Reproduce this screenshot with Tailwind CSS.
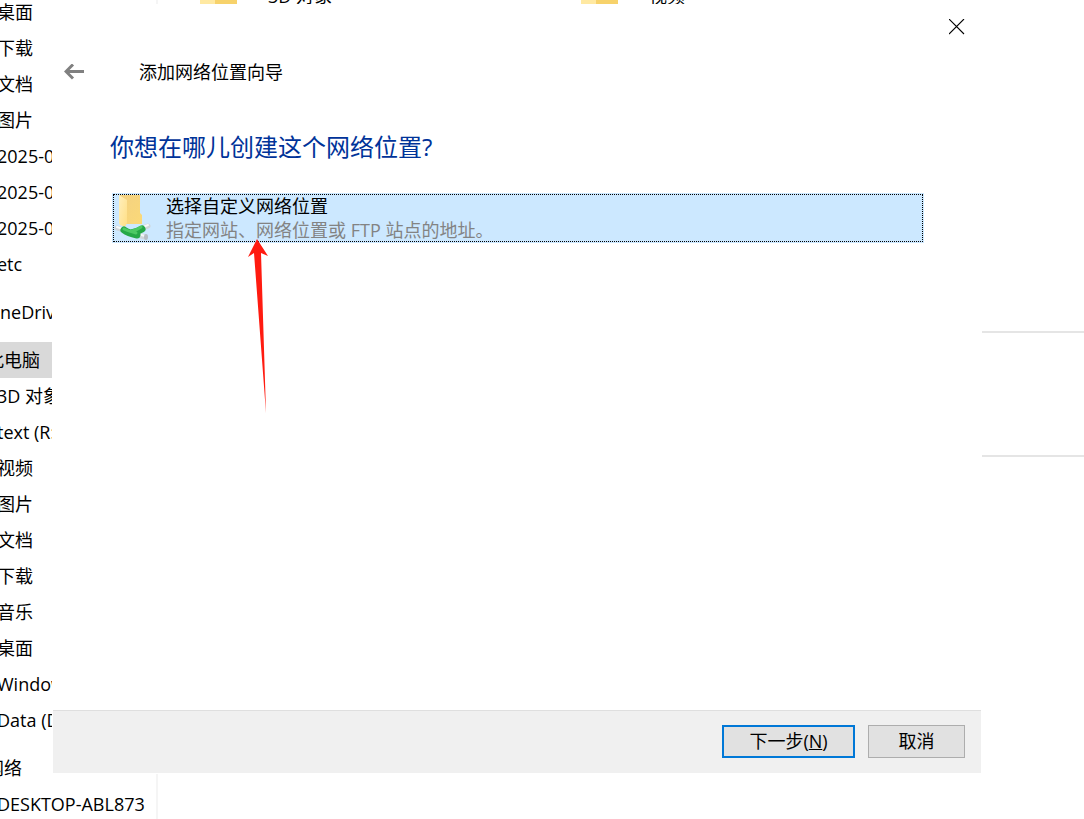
<!DOCTYPE html>
<html lang="zh-CN">
<head>
    <meta charset="UTF-8">
    <meta name="viewport" content="width=device-width, initial-scale=1.0">
    <title>添加网络位置向导</title>
    <script src="https://cdn.jsdelivr.net/npm/@tailwindcss/browser@4"></script>
    <style>
        body {
            font-family: 'Open Sans', 'Noto Sans CJK SC', sans-serif;
        }
    </style>
</head>
<body class="relative h-screen overflow-hidden bg-white text-lg text-black">

    <!-- Explorer window behind the wizard -->
    <div class="flex h-full">
        <nav class="w-[158px] shrink-0 overflow-hidden border-r-2 border-[#f5f5f5] pr-[2px]">
            <ul class="-mt-[6px] -ml-[14px] flex flex-col gap-3 whitespace-nowrap leading-9">
                <li>
                    <ul class="pl-[11px]">
                        <li><a href="#">桌面</a></li>
                        <li><a href="#">下载</a></li>
                        <li><a href="#">文档</a></li>
                        <li><a href="#">图片</a></li>
                        <li><a href="#">2025-01</a></li>
                        <li><a href="#">2025-02</a></li>
                        <li><a href="#">2025-03</a></li>
                        <li><a href="#">etc</a></li>
                    </ul>
                </li>
                <li><a href="#">OneDrive</a></li>
                <li>
                    <a href="#" class="block bg-[#d9d9d9]">此电脑</a>
                    <ul class="pl-[11px]">
                        <li><a href="#">3D 对象</a></li>
                        <li><a href="#">text (R:)</a></li>
                        <li><a href="#">视频</a></li>
                        <li><a href="#">图片</a></li>
                        <li><a href="#">文档</a></li>
                        <li><a href="#">下载</a></li>
                        <li><a href="#">音乐</a></li>
                        <li><a href="#">桌面</a></li>
                        <li><a href="#">Windows</a></li>
                        <li><a href="#">Data (D:)</a></li>
                    </ul>
                </li>
                <li>
                    <a href="#">网络</a>
                    <ul class="pl-[11px]">
                        <li><a href="#">DESKTOP-ABL873</a></li>
                    </ul>
                </li>
            </ul>
        </nav>

        <main class="min-w-0 flex-1 overflow-hidden">
            <section class="h-[333px] border-b-2 border-[#e5e5e5]">
                <div class="relative -top-4 flex pl-[42px] leading-6">
                    <div class="flex w-[381px] gap-[31px]">
                        <span class="h-8 w-[37px] bg-linear-to-r from-[#ffe9a2] from-40% to-[#f7d26b] to-40%"></span>3D 对象
                    </div>
                    <div class="flex gap-[31px]">
                        <span class="h-8 w-[37px] bg-linear-to-r from-[#ffe9a2] from-40% to-[#f7d26b] to-40%"></span>视频
                    </div>
                </div>
            </section>
            <section class="h-[124px] border-b-2 border-[#e5e5e5]"></section>
        </main>
    </div>

    <!-- Wizard -->
    <div role="dialog" aria-labelledby="wizardTitle" class="absolute top-1 right-[102px] bottom-[45px] left-[52px] flex flex-col border border-white bg-white">
        <div class="flex justify-end pt-[14px] pr-4">
            <button aria-label="关闭">
                <svg class="block size-4" viewBox="0 0 16 16" fill="none" stroke="#000" stroke-width="1.1"><path d="M0 0l15 15M15 0L0 15"/></svg>
            </button>
        </div>
        <header class="flex items-center gap-[55px] pt-[23px] pl-[11px]">
            <button aria-label="返回">
                <svg class="block h-4 w-5" viewBox="0 0 20 16" fill="none" stroke="#808080" stroke-width="3"><path d="M1.5 7.5H20M9 .5L2 7.5l7 7"/></svg>
            </button>
            <h2 id="wizardTitle" class="leading-7">添加网络位置向导</h2>
        </header>
        <div class="flex-1 pr-[57px] pl-[59px]">
            <h1 class="mt-[43px] -ml-[2px] text-2xl leading-9 text-[#003399]">你想在哪儿创建这个网络位置?</h1>
            <button class="mt-7 block w-full bg-[#cce8ff] p-px text-left">
                <span class="flex border border-dotted border-black">
                    <svg class="h-[46px] w-[38px] shrink-0" viewBox="0 0 38 46" fill="none" stroke-linecap="round">
                        <defs>
                            <linearGradient id="folder" x2="1" y2="1"><stop stop-color="#f3d182"/><stop offset="1" stop-color="#fbd978"/></linearGradient>
                            <linearGradient id="flap" x2="1" y2="1"><stop stop-color="#ffefbd"/><stop offset="1" stop-color="#ffdf85"/></linearGradient>
                        </defs>
                        <path d="M6 0h20v18l2 2v9H11z" fill="url(#folder)"/>
                        <path d="M5 0l8 5v23l-2 4-5-2-1-2z" fill="url(#flap)"/>
                        <path d="M3 33l6 2M29 33l5-2M24 40l7 2" stroke="#cfd6db" stroke-width="5"/>
                        <path d="M3 32l6 2M29 32l5-2M24 39l7 2" stroke="#f4f7f9" stroke-width="2"/>
                        <path d="M10 35q4 3 13 5M17 38q6-1 11-4" stroke="#25a847" stroke-width="7"/>
                        <path d="M10 34q4 2 12 4M18 36q5-1 9-4" stroke="#4cc964" stroke-width="3"/>
                        <ellipse cx="32" cy="42" rx="2" ry="3" fill="#b5bdc4"/>
                    </svg>
                    <span class="pl-[14px] leading-6">
                        <span class="-mt-px block">选择自定义网络位置</span>
                        <span class="-mb-px block text-[#838383]">指定网站、网络位置或 FTP 站点的地址。</span>
                    </span>
                </span>
            </button>
        </div>
        <footer class="flex justify-end gap-[13px] border-t border-[#dfdfdf] bg-[#f0f0f0] pt-[14px] pr-4 pb-[15px]">
            <button class="h-[33px] w-[133px] border-2 border-[#0078d7] bg-[#e1e1e1] pb-0.5 leading-7">下一步(<span class="underline">N</span>)</button>
            <button class="h-[33px] w-[97px] border border-[#adadad] bg-[#e1e1e1] pb-0.5 leading-7">取消</button>
        </footer>
    </div>

    <!-- Red pointer on the list entry -->
    <svg class="absolute top-[238px] left-[247px] h-[176px] w-[22px]" viewBox="0 0 22 176"><path d="M10 1l11 17-7-3 5 160L7 15l-6 4z" fill="#ff1b10"/></svg>

</body>
</html>
